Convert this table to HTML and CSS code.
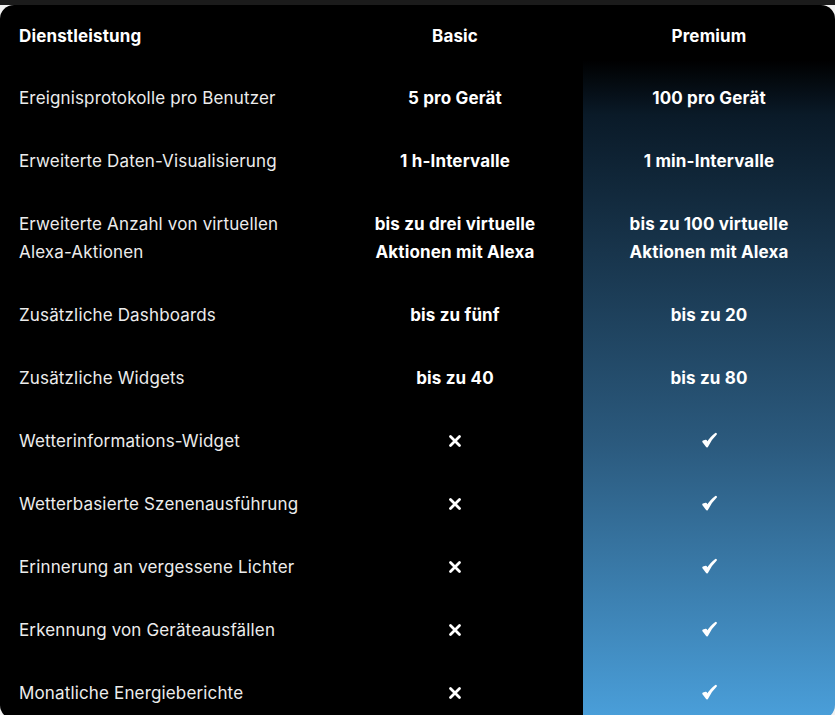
FILE: index.html
```html
<!DOCTYPE html>
<html lang="de">
<head>
<meta charset="utf-8">
<link rel="stylesheet" href="styles.css">
</head>
<body>
<div class="topbar"></div>
<div class="card">
  <div class="row head">
    <div class="label">Dienstleistung</div>
    <div class="val">Basic</div>
    <div class="val">Premium</div>
  </div>
  <div class="row">
    <div class="label">Ereignisprotokolle pro Benutzer</div>
    <div class="val">5 pro Gerät</div>
    <div class="val">100 pro Gerät</div>
  </div>
  <div class="row">
    <div class="label">Erweiterte Daten-Visualisierung</div>
    <div class="val">1 h-Intervalle</div>
    <div class="val">1 min-Intervalle</div>
  </div>
  <div class="row">
    <div class="label">Erweiterte Anzahl von virtuellen<br>Alexa-Aktionen</div>
    <div class="val">bis zu drei virtuelle<br>Aktionen mit Alexa</div>
    <div class="val">bis zu 100 virtuelle<br>Aktionen mit Alexa</div>
  </div>
  <div class="row">
    <div class="label">Zusätzliche Dashboards</div>
    <div class="val">bis zu fünf</div>
    <div class="val">bis zu 20</div>
  </div>
  <div class="row">
    <div class="label">Zusätzliche Widgets</div>
    <div class="val">bis zu 40</div>
    <div class="val">bis zu 80</div>
  </div>
  <div class="row">
    <div class="label">Wetterinformations-Widget</div>
    <div class="val"><svg class="x" viewBox="0 0 14 14"><path d="M2.5 2.5 L11.5 11.5 M11.5 2.5 L2.5 11.5"/></svg></div>
    <div class="val"><svg class="ck" viewBox="0 0 16 16"><path d="M2.2 9 L5.6 13.6 C8 8.5 10.5 5 14 1.8 C10.4 4.2 7.8 7.8 5.8 10.8 L4.6 8.2 Z"/></svg></div>
  </div>
  <div class="row">
    <div class="label">Wetterbasierte Szenenausführung</div>
    <div class="val"><svg class="x" viewBox="0 0 14 14"><path d="M2.5 2.5 L11.5 11.5 M11.5 2.5 L2.5 11.5"/></svg></div>
    <div class="val"><svg class="ck" viewBox="0 0 16 16"><path d="M2.2 9 L5.6 13.6 C8 8.5 10.5 5 14 1.8 C10.4 4.2 7.8 7.8 5.8 10.8 L4.6 8.2 Z"/></svg></div>
  </div>
  <div class="row">
    <div class="label">Erinnerung an vergessene Lichter</div>
    <div class="val"><svg class="x" viewBox="0 0 14 14"><path d="M2.5 2.5 L11.5 11.5 M11.5 2.5 L2.5 11.5"/></svg></div>
    <div class="val"><svg class="ck" viewBox="0 0 16 16"><path d="M2.2 9 L5.6 13.6 C8 8.5 10.5 5 14 1.8 C10.4 4.2 7.8 7.8 5.8 10.8 L4.6 8.2 Z"/></svg></div>
  </div>
  <div class="row">
    <div class="label">Erkennung von Geräteausfällen</div>
    <div class="val"><svg class="x" viewBox="0 0 14 14"><path d="M2.5 2.5 L11.5 11.5 M11.5 2.5 L2.5 11.5"/></svg></div>
    <div class="val"><svg class="ck" viewBox="0 0 16 16"><path d="M2.2 9 L5.6 13.6 C8 8.5 10.5 5 14 1.8 C10.4 4.2 7.8 7.8 5.8 10.8 L4.6 8.2 Z"/></svg></div>
  </div>
  <div class="row">
    <div class="label">Monatliche Energieberichte</div>
    <div class="val"><svg class="x" viewBox="0 0 14 14"><path d="M2.5 2.5 L11.5 11.5 M11.5 2.5 L2.5 11.5"/></svg></div>
    <div class="val"><svg class="ck" viewBox="0 0 16 16"><path d="M2.2 9 L5.6 13.6 C8 8.5 10.5 5 14 1.8 C10.4 4.2 7.8 7.8 5.8 10.8 L4.6 8.2 Z"/></svg></div>
  </div>
</div>
</body>
</html>
```
FILE: styles.css
```css
html, body {
  margin: 0;
  padding: 0;
  overflow: hidden;
  background: #f2f2f2;
}
body {
  font-family: Inter, "Noto Sans", sans-serif;
  width: 835px;
  height: 715px;
}
.topbar {
  height: 5px;
  background: #1b1b1b;
}
.card {
  height: 714px;
  border-radius: 14px;
  background:
    linear-gradient(to bottom, #000 0px, #000 55px, #0a1a28 110px, #2b5a7e 440px, #4a9fda 714px) no-repeat right top / 252px 100%,
    #000;
  color: #fff;
  display: flex;
  flex-direction: column;
}
.row {
  display: grid;
  grid-template-columns: 327px 256px 252px;
  align-items: center;
  padding: 17.5px 0;
  line-height: 28px;
  font-size: 17px;
  letter-spacing: 0.15px;
}
.row.head {
  padding: 17px 0 16.2px;
}
.label {
  padding-left: 19px;
  color: #ececec;
  font-weight: 400;
}
.head .label {
  font-weight: 700;
  color: #fff;
}
.val {
  text-align: center;
  font-weight: 700;
  color: #fff;
  display: flex;
  justify-content: center;
  align-items: center;
  min-height: 28px;
}
.x {
  width: 14px;
  height: 14px;
  fill: none;
  stroke: #fff;
  stroke-width: 2.8;
  stroke-linecap: round;
}
.ck {
  width: 17px;
  height: 17px;
  fill: #fff;
  stroke: #fff;
  stroke-width: 2;
  stroke-linejoin: round;
}
```
